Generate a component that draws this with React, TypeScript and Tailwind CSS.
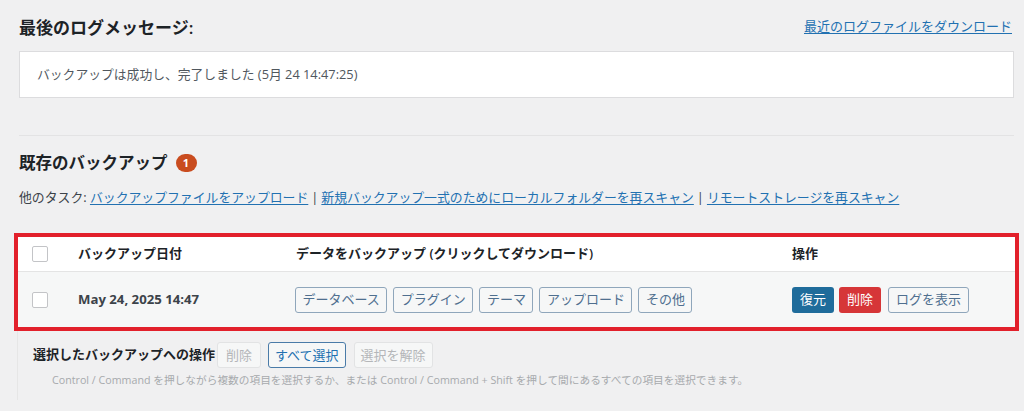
import React from 'react';

const font = "font-['Open_Sans','Noto_Sans_CJK_JP',sans-serif]";

const Checkbox: React.FC = () => (
  <span className="block w-4 h-4 bg-white border border-[#c3c4c7] rounded-[2px]" />
);

const DataButton: React.FC<{ label: string }> = ({ label }) => (
  <button
    type="button"
    className="h-[26px] px-[6.5px] border border-[#8fa6bb] rounded-[3px] bg-[#f6f7f7] text-[13px] leading-none text-[#4f6f8f]"
  >
    {label}
  </button>
);

const App: React.FC = () => {
  const entities = ['データベース', 'プラグイン', 'テーマ', 'アップロード', 'その他'];

  return (
    <div className={`min-h-screen bg-[#f0f0f1] ${font} text-[#1d2327] pl-[19px] pr-[10px] pb-4`}>
      {/* ログメッセージ */}
      <div className="flex items-center justify-between h-[26px] pt-[14px] box-content">
        <h2 className="text-[17px] font-semibold leading-none">最後のログメッセージ:</h2>
        <a href="#" className="text-[13px] text-[#2271b1] underline underline-offset-2 pr-[2px]">
          最近のログファイルをダウンロード
        </a>
      </div>
      <div className="mt-[11px] h-[47px] bg-white border border-[#dcdcde] flex items-center px-[17px] text-[12.8px] text-[#50575e]">
        バックアップは成功し、完了しました (5月 24 14:47:25)
      </div>

      <div className="mt-[37px] h-px bg-[#e3e3e4]" />

      {/* 既存のバックアップ */}
      <div className="mt-[14px] h-[26px] flex items-center">
        <h2 className="text-[16.5px] font-semibold leading-none">既存のバックアップ</h2>
        <span className="ml-[8px] w-[21px] h-[18px] rounded-full bg-[#c94c1f] text-white text-[11px] font-bold flex items-center justify-center">
          1
        </span>
      </div>

      <div className="mt-[12px] h-[20px] flex items-center text-[12.85px] text-[#3c434a] whitespace-nowrap">
        <span>他のタスク:&nbsp;</span>
        <a href="#" className="text-[#2271b1] underline underline-offset-2">バックアップファイルをアップロード</a>
        <span className="px-[3px]">|</span>
        <a href="#" className="text-[#2271b1] underline underline-offset-2">新規バックアップ一式のためにローカルフォルダーを再スキャン</a>
        <span className="px-[3px]">|</span>
        <a href="#" className="text-[#2271b1] underline underline-offset-2">リモートストレージを再スキャン</a>
      </div>

      {/* テーブル */}
      <div className="mt-[25px] -ml-[5px] -mr-[5px] border-4 border-[#e2202b]">
        <div className="grid grid-cols-[60px_218px_496px_1fr] h-[35px] items-center bg-white border-b border-[#e4e4e4] text-[13px] font-semibold">
          <div className="pl-[14px]"><Checkbox /></div>
          <div>バックアップ日付</div>
          <div>データをバックアップ (クリックしてダウンロード)</div>
          <div>操作</div>
        </div>
        <div className="grid grid-cols-[60px_217px_497px_1fr] h-[55px] items-center bg-[#f6f7f7]">
          <div className="pl-[14px]"><Checkbox /></div>
          <div className="text-[13.2px] font-bold text-[#3c434a]">May 24, 2025 14:47</div>
          <div className="flex gap-[6px]">
            {entities.map((e) => (
              <DataButton key={e} label={e} />
            ))}
          </div>
          <div className="flex items-center">
            <button type="button" className="h-[26px] px-[8px] rounded-[3px] bg-[#1f6c9b] text-white text-[13px] leading-none">
              復元
            </button>
            <button type="button" className="ml-[5px] h-[26px] px-[8px] rounded-[3px] bg-[#d63638] text-white text-[13px] leading-none">
              削除
            </button>
            <button
              type="button"
              className="ml-[7px] h-[26px] px-[7px] border border-[#8fa6bb] rounded-[3px] bg-[#f6f7f7] text-[13px] leading-none text-[#4f6f8f]"
            >
              ログを表示
            </button>
          </div>
        </div>
      </div>

      {/* 一括操作 */}
      <div className="-ml-[2px] border-l border-[#e6e6e6] pl-[15px] pt-[11px] pb-[12px]">
        <div className="flex items-center">
          <span className="text-[13px] font-bold text-[#1d2327]">選択したバックアップへの操作</span>
          <button type="button" className="ml-[2px] h-[26px] px-[8px] border border-[#e2e3e4] rounded-[3px] bg-[#f6f7f7] text-[13px] leading-none text-[#b4b6b9]">
            削除
          </button>
          <button type="button" className="ml-[7px] h-[26px] px-[6px] border border-[#4a7ba8] rounded-[3px] bg-[#f6f7f7] text-[13px] leading-none text-[#2271b1]">
            すべて選択
          </button>
          <button type="button" className="ml-[8px] h-[26px] px-[6px] border border-[#e2e3e4] rounded-[3px] bg-[#f6f7f7] text-[13px] leading-none text-[#b4b6b9]">
            選択を解除
          </button>
        </div>
        <p className="mt-[4px] pl-[19px] text-[10.7px] leading-[16px] text-[#a7aaad]">
          Control / Command を押しながら複数の項目を選択するか、または Control / Command + Shift を押して間にあるすべての項目を選択できます。
        </p>
      </div>
    </div>
  );
};

export default App;
